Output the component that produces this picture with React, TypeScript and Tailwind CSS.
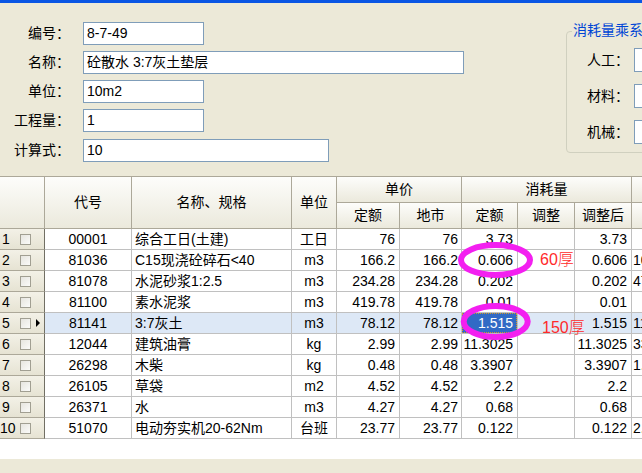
import React from 'react';

type Row = {
  n: number;
  code: string;
  name: string;
  unit: string;
  de: string;
  ds: string;
  xde: string;
  tz: string;
  tzh: string;
  last: string;
};

const rows: Row[] = [
  { n: 1, code: '00001', name: '综合工日(土建)', unit: '工日', de: '76', ds: '76', xde: '3.73', tz: '', tzh: '3.73', last: '' },
  { n: 2, code: '81036', name: 'C15现浇砼碎石<40', unit: 'm3', de: '166.2', ds: '166.2', xde: '0.606', tz: '', tzh: '0.606', last: '100.72' },
  { n: 3, code: '81078', name: '水泥砂浆1:2.5', unit: 'm3', de: '234.28', ds: '234.28', xde: '0.202', tz: '', tzh: '0.202', last: '47.32' },
  { n: 4, code: '81100', name: '素水泥浆', unit: 'm3', de: '419.78', ds: '419.78', xde: '0.01', tz: '', tzh: '0.01', last: '' },
  { n: 5, code: '81141', name: '3:7灰土', unit: 'm3', de: '78.12', ds: '78.12', xde: '1.515', tz: '', tzh: '1.515', last: '118.35' },
  { n: 6, code: '12044', name: '建筑油膏', unit: 'kg', de: '2.99', ds: '2.99', xde: '11.3025', tz: '', tzh: '11.3025', last: '33.79' },
  { n: 7, code: '26298', name: '木柴', unit: 'kg', de: '0.48', ds: '0.48', xde: '3.3907', tz: '', tzh: '3.3907', last: '1.63' },
  { n: 8, code: '26105', name: '草袋', unit: 'm2', de: '4.52', ds: '4.52', xde: '2.2', tz: '', tzh: '2.2', last: '' },
  { n: 9, code: '26371', name: '水', unit: 'm3', de: '4.27', ds: '4.27', xde: '0.68', tz: '', tzh: '0.68', last: '' },
  { n: 10, code: '51070', name: '电动夯实机20-62Nm', unit: '台班', de: '23.77', ds: '23.77', xde: '0.122', tz: '', tzh: '0.122', last: '2.9' },
];

const FONT = { fontFamily: '"Liberation Sans", "Noto Sans CJK SC", sans-serif' };

const hd =
  'flex items-center justify-center bg-linear-to-b from-[#fdfdfb] to-[#ebe9dc] border-r border-b border-[#aca899] shrink-0';
const td = 'h-[21px] leading-[20px] border-r border-b border-[#c0c0c0] shrink-0 whitespace-nowrap overflow-hidden';

const Field = ({ label, value, width }: { label: string; value: string; width: string }) => (
  <div className="flex items-center h-[23px]">
    <div className="w-[70px] text-right">{label}</div>
    <div className={`ml-[13px] h-[23px] border border-[#7f9db9] bg-white px-[3px] leading-[21px] ${width}`}>{value}</div>
  </div>
);

const Checkbox = () => (
  <div className="w-[11px] h-[11px] border border-[#a19f92] bg-linear-to-br from-[#e6e5df] to-[#fbfbf9]" />
);

export default function App() {
  return (
    <div className="relative w-[642px] h-[473px] overflow-hidden bg-[#ece9d8] text-[14px] text-black" style={FONT}>
      <div className="h-[3px] bg-[#0a56e4]" />

      {/* top form */}
      <div className="flex h-[173px]">
        <div className="w-[566px] shrink-0 pt-[19px] flex flex-col gap-[6px]">
          <Field label="编号：" value="8-7-49" width="w-[121px]" />
          <Field label="名称：" value="砼散水 3:7灰土垫层" width="w-[381px]" />
          <Field label="单位：" value="10m2" width="w-[121px]" />
          <Field label="工程量：" value="1" width="w-[121px]" />
          <div className="mt-px">
            <Field label="计算式：" value="10" width="w-[246px]" />
          </div>
        </div>

        <div className="relative w-[130px] shrink-0 mt-[28px] h-[122px] rounded-[4px] border border-[#d0d0bf]">
          <div className="absolute left-[5px] top-[-10px] bg-[#ece9d8] px-px leading-[16px] text-[#0046d5] whitespace-nowrap">
            消耗量乘系
          </div>
          <div className="pl-[20px] pt-[16px] flex flex-col gap-[12px]">
            {['人工：', '材料：', '机械：'].map((l) => (
              <div key={l} className="flex items-center h-[24px]">
                <div className="w-[47px]">{l}</div>
                <div className="w-[60px] h-[24px] border border-[#7f9db9] bg-white" />
              </div>
            ))}
          </div>
        </div>
      </div>

      {/* grid */}
      <div className="h-[283px] bg-white border-t border-[#aca899]">
        <div className="flex h-[52px]">
          <div className={`${hd} w-[45px] h-[52px]`} />
          <div className={`${hd} w-[87px] h-[52px]`}>代号</div>
          <div className={`${hd} w-[160px] h-[52px]`}>名称、规格</div>
          <div className={`${hd} w-[45px] h-[52px]`}>单位</div>
          <div className="w-[125px] shrink-0 flex flex-col">
            <div className={`${hd} w-[125px] h-[26px]`}>单价</div>
            <div className="flex">
              <div className={`${hd} w-[63px] h-[26px]`}>定额</div>
              <div className={`${hd} w-[62px] h-[26px]`}>地市</div>
            </div>
          </div>
          <div className="w-[170px] shrink-0 flex flex-col">
            <div className={`${hd} w-[170px] h-[26px]`}>消耗量</div>
            <div className="flex">
              <div className={`${hd} w-[56px] h-[26px]`}>定额</div>
              <div className={`${hd} w-[57px] h-[26px]`}>调整</div>
              <div className={`${hd} w-[57px] h-[26px]`}>调整后</div>
            </div>
          </div>
          <div className="w-[70px] shrink-0 flex flex-col">
            <div className={`${hd} w-[70px] h-[26px]`} />
            <div className={`${hd} w-[70px] h-[26px]`} />
          </div>
        </div>

        {rows.map((r) => {
          const sel = r.n === 5;
          return (
            <div key={r.n} className={`flex ${sel ? 'bg-[#dde8f6]' : ''}`}>
              <div className="h-[21px] w-[45px] shrink-0 flex items-center bg-linear-to-b from-[#f3f1e7] to-[#e6e3d3] border-r border-b border-r-[#716f64] border-b-[#aca899]">
                <span className={`w-[20px] leading-[20px] ${r.n === 10 ? 'pl-0' : 'pl-[2px]'}`}>{r.n}</span>
                <Checkbox />
                {sel && (
                  <span className="ml-[5px] w-0 h-0 border-y-[4px] border-y-transparent border-l-[4px] border-l-black" />
                )}
              </div>
              <div className={`${td} w-[87px] text-center`}>{r.code}</div>
              <div className={`${td} w-[160px] pl-[3px]`}>{r.name}</div>
              <div className={`${td} w-[45px] text-center`}>{r.unit}</div>
              <div className={`${td} w-[63px] text-right pr-[4px]`}>{r.de}</div>
              <div className={`${td} w-[62px] text-right pr-[3px]`}>{r.ds}</div>
              <div className={`${td} w-[56px] text-right ${sel ? 'p-0' : 'pr-[4px]'}`}>
                {sel ? (
                  <div className="h-[20px] bg-[#316ac5] text-white border border-dotted border-[#d49a2a] pr-[3px] leading-[18px]">
                    {r.xde}
                  </div>
                ) : (
                  r.xde
                )}
              </div>
              <div className={`${td} w-[57px] text-right pr-[4px]`}>{r.tz}</div>
              <div className={`${td} w-[57px] text-right pr-[4px]`}>{r.tzh}</div>
              <div className={`${td} w-[70px] pl-px`}>{r.last}</div>
            </div>
          );
        })}
      </div>

      {/* annotations drawn on the screenshot */}
      <svg className="absolute inset-0 pointer-events-none" width="642" height="473">
        <ellipse cx="495.5" cy="260" rx="34.5" ry="15" fill="none" stroke="#f31ff0" strokeWidth="6" />
        <ellipse cx="495.7" cy="321.5" rx="32" ry="15.5" fill="none" stroke="#f31ff0" strokeWidth="6" />
      </svg>
      <span className="absolute left-[540px] top-[250px] text-[16px] leading-[20px] font-light text-[#ff2a2a]">60厚</span>
      <span className="absolute left-[542px] top-[318px] text-[16px] leading-[20px] font-light text-[#ff2a2a]">150厚</span>
    </div>
  );
}
